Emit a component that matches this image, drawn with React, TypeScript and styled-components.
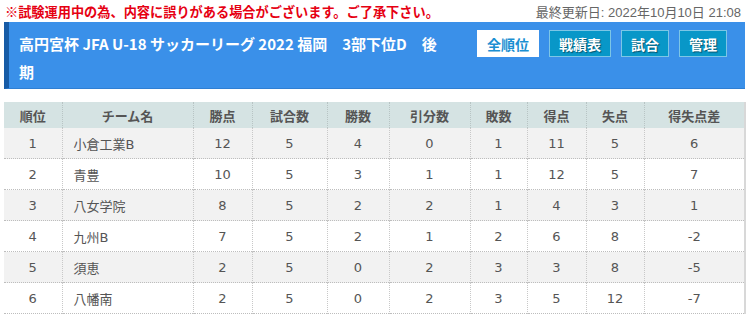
import React from 'react';
import styled, { createGlobalStyle } from 'styled-components';

type Row = {
  rank: number;
  team: string;
  points: number;
  played: number;
  won: number;
  drawn: number;
  lost: number;
  gf: number;
  ga: number;
  diff: number;
};

const rows: Row[] = [
  { rank: 1, team: '小倉工業B', points: 12, played: 5, won: 4, drawn: 0, lost: 1, gf: 11, ga: 5, diff: 6 },
  { rank: 2, team: '青豊', points: 10, played: 5, won: 3, drawn: 1, lost: 1, gf: 12, ga: 5, diff: 7 },
  { rank: 3, team: '八女学院', points: 8, played: 5, won: 2, drawn: 2, lost: 1, gf: 4, ga: 3, diff: 1 },
  { rank: 4, team: '九州B', points: 7, played: 5, won: 2, drawn: 1, lost: 2, gf: 6, ga: 8, diff: -2 },
  { rank: 5, team: '須恵', points: 2, played: 5, won: 0, drawn: 2, lost: 3, gf: 3, ga: 8, diff: -5 },
  { rank: 6, team: '八幡南', points: 2, played: 5, won: 0, drawn: 2, lost: 3, gf: 5, ga: 12, diff: -7 },
];

const columns = [
  { label: '順位', width: 58 },
  { label: 'チーム名', width: 131 },
  { label: '勝点', width: 59 },
  { label: '試合数', width: 75 },
  { label: '勝数', width: 62 },
  { label: '引分数', width: 81 },
  { label: '敗数', width: 57 },
  { label: '得点', width: 59 },
  { label: '失点', width: 58 },
  { label: '得失点差', width: 101 },
];

const GlobalStyle = createGlobalStyle`
  body {
    margin: 0;
    background: #fff;
    font-family: "DejaVu Sans", "Noto Sans CJK JP", sans-serif;
  }
`;

const Page = styled.div`
  padding: 2px 5px 0 4px;
`;

const Notice = styled.div`
  display: flex;
  justify-content: space-between;
  align-items: center;
  height: 18px;
  padding-left: 1px;
  font-family: "Liberation Sans", "Noto Sans CJK JP", sans-serif;
  font-size: 13px;
`;

const Warning = styled.span`
  color: #e60012;
  font-weight: bold;
  font-size: 13.2px;
`;

const Updated = styled.span`
  color: #666;
  padding-right: 4px;
`;

const TitleBar = styled.div`
  margin-top: 2px;
  display: flex;
  justify-content: space-between;
  align-items: flex-start;
  background: #3a90e9;
  border-left: 5px solid #175ba6;
  border-bottom: 1px solid #2f7fd3;
  padding: 8px 18px 2px 10px;
`;

const Title = styled.h1`
  margin: 0;
  width: 428px;
  color: #fff;
  font-family: "Noto Sans CJK JP", sans-serif;
  font-size: 15px;
  font-weight: bold;
  line-height: 28px;
`;

const Buttons = styled.div`
  display: flex;
  gap: 10px;
`;

const NavButton = styled.button<{ $active?: boolean }>`
  height: 27px;
  padding: 0 9px;
  border: 1px solid ${(p) => (p.$active ? '#fff' : '#7cc6e6')};
  background: ${(p) => (p.$active ? '#fff' : '#0897c8')};
  color: ${(p) => (p.$active ? '#1b8fd2' : '#fff')};
  text-shadow: ${(p) => (p.$active ? 'none' : '1px 1px 1px rgba(0,0,0,0.45)')};
  font-family: "Noto Sans CJK JP", sans-serif;
  font-size: 14px;
  font-weight: bold;
  cursor: pointer;
`;

const Table = styled.table`
  margin-top: 13px;
  width: 741px;
  border-collapse: collapse;
  table-layout: fixed;
  border-right: 2px solid #d8d8d8;
  font-size: 13px;
  color: #555;
`;

const Th = styled.th`
  height: 26px;
  padding: 0;
  background: #d5e3e3;
  font-family: "Noto Sans CJK JP", sans-serif;
  font-weight: bold;
  color: #555;
  border-right: 1px dotted #b8c4c4;
  &:last-child {
    border-right: none;
  }
`;

const Tr = styled.tr<{ $odd: boolean }>`
  background: ${(p) => (p.$odd ? '#f2f2f2' : '#fff')};
  border-bottom: 1px dotted #bdbdbd;
`;

const Td = styled.td<{ $left?: boolean }>`
  height: 30px;
  padding: ${(p) => (p.$left ? '0 0 0 11px' : '0')};
  text-align: ${(p) => (p.$left ? 'left' : 'center')};
  border-right: 1px dotted #c8c8c8;
  &:last-child {
    border-right: none;
  }
`;

const App: React.FC = () => {
  return (
    <Page>
      <GlobalStyle />
      <Notice>
        <Warning>※試験運用中の為、内容に誤りがある場合がございます。ご了承下さい。</Warning>
        <Updated>最終更新日: 2022年10月10日 21:08</Updated>
      </Notice>

      <TitleBar>
        <Title>高円宮杯 JFA U-18 サッカーリーグ 2022 福岡　3部下位D　後期</Title>
        <Buttons>
          <NavButton $active>全順位</NavButton>
          <NavButton>戦績表</NavButton>
          <NavButton>試合</NavButton>
          <NavButton>管理</NavButton>
        </Buttons>
      </TitleBar>

      <Table>
        <colgroup>
          {columns.map((c) => (
            <col key={c.label} style={{ width: c.width }} />
          ))}
        </colgroup>
        <thead>
          <tr>
            {columns.map((c) => (
              <Th key={c.label}>{c.label}</Th>
            ))}
          </tr>
        </thead>
        <tbody>
          {rows.map((r, i) => (
            <Tr key={r.rank} $odd={i % 2 === 0}>
              <Td>{r.rank}</Td>
              <Td $left>{r.team}</Td>
              <Td>{r.points}</Td>
              <Td>{r.played}</Td>
              <Td>{r.won}</Td>
              <Td>{r.drawn}</Td>
              <Td>{r.lost}</Td>
              <Td>{r.gf}</Td>
              <Td>{r.ga}</Td>
              <Td>{r.diff}</Td>
            </Tr>
          ))}
        </tbody>
      </Table>
    </Page>
  );
};

export default App;
